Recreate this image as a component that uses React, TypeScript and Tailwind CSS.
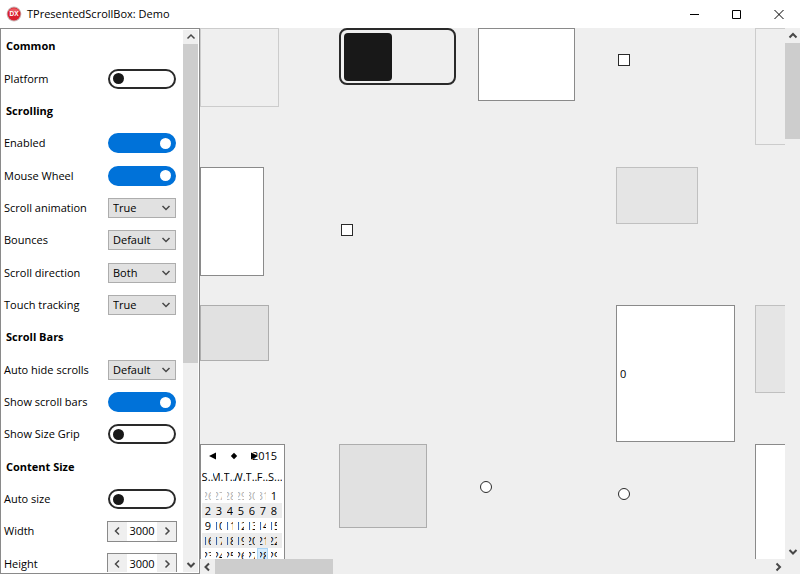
import React, { useState } from "react";

type Direction = "up" | "down" | "left" | "right";

const CHEVRONS: Record<Direction, string> = {
  up: "M1.5 6.5 5 3 8.5 6.5",
  down: "M1.5 3 5 6.5 8.5 3",
  left: "M6 1.5 2.5 5 6 8.5",
  right: "M3.5 1.5 7 5 3.5 8.5",
};

function Chevron({ direction, thick = false }: { direction: Direction; thick?: boolean }) {
  return (
    <svg width="10" height="10" viewBox="0 0 10 10" fill="none" stroke="#484848" strokeWidth={thick ? 2 : 1.5} aria-hidden="true">
      <path d={CHEVRONS[direction]} />
    </svg>
  );
}

function Logo() {
  return (
    <svg width="16" height="16" viewBox="0 0 16 16" aria-hidden="true">
      <circle cx="8" cy="8" r="7.4" fill="#c9bcbc" />
      <circle cx="8" cy="8" r="6.5" fill="#d9202c" />
      <path d="M2.6 5.6a6 6 0 0 1 10.8 0Q8 7.4 2.6 5.6Z" fill="#ea5a60" />
      <text x="8" y="10.2" textAnchor="middle" fontSize="6.5" fontWeight="700" fill="#fff" fontFamily="Liberation Sans, sans-serif">
        DX
      </text>
    </svg>
  );
}

function TitleBar() {
  return (
    <header className="flex h-7 shrink-0 items-center bg-white">
      <div className="flex flex-1 items-center gap-1 pl-1.5">
        <Logo />
        <h1 className="pl-px text-[11px] leading-4">TPresentedScrollBox: Demo</h1>
      </div>
      <button aria-label="Minimize" className="flex h-[26px] w-[42px] items-center justify-center">
        <svg width="11" height="11" viewBox="0 0 11 11" stroke="#000">
          <path d="M0 5.5h9" />
        </svg>
      </button>
      <button aria-label="Maximize" className="flex h-[26px] w-[42px] items-center justify-center">
        <svg width="11" height="11" viewBox="0 0 11 11" stroke="#000" fill="none">
          <path d="M.5 1.5h8v8h-8z" />
        </svg>
      </button>
      <button aria-label="Close" className="flex h-[26px] w-[42px] items-center justify-center">
        <svg width="11" height="11" viewBox="0 0 11 11" stroke="#000">
          <path d="m.5 1 9 9M9.5 1l-9 9" />
        </svg>
      </button>
    </header>
  );
}

function Heading({ children }: { children: React.ReactNode }) {
  return <h2 className="flex items-center pl-[5px] font-bold">{children}</h2>;
}

function Row({ id, label, children }: { id: string; label: string; children: React.ReactNode }) {
  return (
    <div className="flex items-center justify-between pr-[7px] pl-[3px]">
      <label htmlFor={id}>{label}</label>
      {children}
    </div>
  );
}

function SwitchRow({ id, label, on = false }: { id: string; label: string; on?: boolean }) {
  return (
    <Row id={id} label={label}>
      <input
        id={id}
        type="checkbox"
        role="switch"
        defaultChecked={on}
        className="flex h-5 w-[68px] appearance-none items-center rounded-full border-2 border-[#2a2a2a] bg-white px-[3px] before:size-[11px] before:rounded-full before:bg-[#181818] before:content-[''] checked:justify-end checked:border-[#0072d9] checked:bg-[#0072d9] checked:before:bg-white"
      />
    </Row>
  );
}

function SelectRow({ id, label, options }: { id: string; label: string; options: string[] }) {
  return (
    <Row id={id} label={label}>
      <div className="relative">
        <select
          id={id}
          className="block h-5 w-[68px] appearance-none border border-[#adadad] bg-[#e1e1e1] pl-1 leading-4"
        >
          {options.map((o) => (
            <option key={o}>{o}</option>
          ))}
        </select>
        <span className="pointer-events-none absolute top-[5px] right-[5px]">
          <Chevron direction="down" />
        </span>
      </div>
    </Row>
  );
}

function SpinRow({ id, label }: { id: string; label: string }) {
  const [value, setValue] = useState(3000);
  return (
    <Row id={id} label={label}>
      <div className="-mr-px flex h-[21px] w-[70px] border border-[#8a8a8a] bg-white">
        <button aria-label={`Decrease ${label}`} onClick={() => setValue(value - 1)} className="flex w-[19px] items-center justify-center bg-[#efefef]">
          <Chevron direction="left" />
        </button>
        <input
          id={id}
          value={value}
          onChange={(e) => setValue(Number(e.target.value) || 0)}
          className="w-[30px] min-w-0 text-center"
        />
        <button aria-label={`Increase ${label}`} onClick={() => setValue(value + 1)} className="flex w-[19px] items-center justify-center bg-[#efefef]">
          <Chevron direction="right" />
        </button>
      </div>
    </Row>
  );
}

function Settings() {
  return (
    <aside className="flex w-[200px] shrink-0 border border-[#8a8a8a] bg-white py-px pr-px">
      <div className="flex-1 overflow-hidden">
        <div className="grid h-[550px] auto-rows-fr">
          <Heading>Common</Heading>
          <SwitchRow id="platform" label="Platform" />
          <Heading>Scrolling</Heading>
          <SwitchRow id="enabled" label="Enabled" on />
          <SwitchRow id="wheel" label="Mouse Wheel" on />
          <SelectRow id="animation" label="Scroll animation" options={["True", "False"]} />
          <SelectRow id="bounces" label="Bounces" options={["Default", "True", "False"]} />
          <SelectRow id="direction" label="Scroll direction" options={["Both", "Horizontal", "Vertical"]} />
          <SelectRow id="tracking" label="Touch tracking" options={["True", "False"]} />
          <Heading>Scroll Bars</Heading>
          <SelectRow id="autohide" label="Auto hide scrolls" options={["Default", "True", "False"]} />
          <SwitchRow id="bars" label="Show scroll bars" on />
          <SwitchRow id="grip" label="Show Size Grip" />
          <Heading>Content Size</Heading>
          <SwitchRow id="autosize" label="Auto size" />
          <SpinRow id="width" label="Width" />
          <SpinRow id="height" label="Height" />
        </div>
      </div>
      <div className="flex w-[15px] flex-col bg-[#efefef]">
        <button aria-label="Scroll settings up" className="flex h-3.5 items-center justify-center">
          <Chevron direction="up" />
        </button>
        <div className="h-[319px] bg-[#cdcdcd]" />
        <div className="flex-1" />
        <button aria-label="Scroll settings down" className="flex h-[15px] items-center justify-center">
          <Chevron direction="down" thick />
        </button>
      </div>
    </aside>
  );
}

const WEEKDAYS = ["S..", "M..", "T..", "W..", "T..", "F..", "S..."];
const WEEKS = [
  [26, 27, 28, 29, 30, 31, 1],
  [2, 3, 4, 5, 6, 7, 8],
  [9, 10, 11, 12, 13, 14, 15],
  [16, 17, 18, 19, 20, 21, 22],
  [23, 24, 25, 26, 27, 28, 29],
];

function Calendar() {
  return (
    <div className="w-[85px] overflow-hidden border border-[#8a8a8a] bg-white px-px">
      <div className="flex h-[21px] items-center">
        <button aria-label="Previous month" className="flex w-[21px] justify-center">
          <svg width="7" height="8" viewBox="0 0 7 8"><path d="M0 4 7 .5v7z" /></svg>
        </button>
        <button aria-label="Today" className="flex w-[21px] justify-center">
          <svg width="8" height="8" viewBox="0 0 8 8"><path d="m4 .8 3.2 3.2L4 7.2.8 4z" /></svg>
        </button>
        <button aria-label="Next month" className="flex w-[21px] justify-center">
          <svg width="7" height="8" viewBox="0 0 7 8"><path d="M7 4 0 .5v7z" /></svg>
        </button>
        <button className="-ml-[13px]">2015</button>
      </div>
      <table className="border-collapse">
        <thead>
          <tr>
            {WEEKDAYS.map((d, i) => (
              <th key={i} className="p-0 font-normal">
                <div
                  className={
                    i === 6
                      ? "flex h-[22px] w-3.5 items-center overflow-hidden"
                      : "flex h-[22px] w-[11px] items-center justify-center overflow-hidden"
                  }
                >
                  <span>{d}</span>
                </div>
              </th>
            ))}
          </tr>
        </thead>
        <tbody>
          {WEEKS.map((week, w) => (
            <tr key={w} className="even:bg-[#ececec]">
              {week.map((day, i) => (
                <td
                  key={i}
                  className={
                    w === 4 && day === 28
                      ? "bg-[#d5ebfc] p-0 outline -outline-offset-1 outline-[#a8d4f5]"
                      : w === 0 && day > 20
                        ? "p-0 text-[#b0b0b0]"
                        : "p-0"
                  }
                >
                  <div className="mr-0.5 ml-[3px] flex h-[15px] w-1.5 items-center justify-center overflow-hidden">
                    <span>{day}</span>
                  </div>
                </td>
              ))}
            </tr>
          ))}
        </tbody>
      </table>
    </div>
  );
}

const CHECKBOX = "size-3 appearance-none border border-[#2a2a2a] bg-white";
const RADIO = "size-3 appearance-none rounded-full border border-[#2a2a2a] bg-white";

function Canvas() {
  return (
    <div className="min-h-0 min-w-0 flex-1 overflow-hidden">
      <div className="grid grid-cols-[139px_139px_138px_139px_139px] grid-rows-[139px_138px_139px_139px] items-start">
        <div className="h-[79px] w-[79px] border border-[#cccccc]" />
        <input
          type="checkbox"
          role="switch"
          aria-label="Large switch"
          className="flex h-[57px] w-[117px] appearance-none items-center rounded-lg border-2 border-[#2a2a2a] px-[3px] before:size-12 before:rounded-[4px] before:bg-[#181818] before:content-[''] checked:justify-end"
        />
        <textarea aria-label="Memo" className="block h-[73px] w-[97px] resize-none border border-[#8a8a8a] bg-white" />
        <div className="flex h-16 items-center pl-0.5">
          <input type="checkbox" aria-label="Option A" className={CHECKBOX} />
        </div>
        <div className="h-[117px] w-[117px] border border-[#cccccc]" />

        <textarea aria-label="Notes" className="block h-[109px] w-16 resize-none border border-[#8a8a8a] bg-white" />
        <div className="flex h-[126px] items-center pl-0.5">
          <input type="checkbox" aria-label="Option B" className={CHECKBOX} />
        </div>
        <div />
        <button aria-label="Tool" className="h-[57px] w-[82px] border border-[#c0c0c0] bg-[#e5e5e5]" />
        <div />

        <button aria-label="Action" className="h-14 w-[69px] border border-[#adadad] bg-[#e1e1e1]" />
        <div />
        <div />
        <input aria-label="Number" defaultValue="0" className="h-[137px] w-[119px] border border-[#8a8a8a] bg-white px-[3px]" />
        <button aria-label="Side tool" className="h-[88px] w-[117px] border border-[#c0c0c0] bg-[#e5e5e5]" />

        <Calendar />
        <button aria-label="Large action" className="h-[84px] w-[88px] border border-[#adadad] bg-[#e1e1e1]" />
        <div className="flex h-[86px] items-center pl-0.5">
          <input type="radio" name="choice" aria-label="Choice A" className={RADIO} />
        </div>
        <div className="flex h-[100px] items-center pl-0.5">
          <input type="radio" name="choice" aria-label="Choice B" className={RADIO} />
        </div>
        <textarea aria-label="List" className="block h-[139px] w-[117px] resize-none border border-[#8a8a8a] bg-white" />
      </div>
    </div>
  );
}

export default function App() {
  return (
    <div className="flex h-screen flex-col overflow-hidden bg-[#efefef] font-['Open_Sans','Noto_Sans',sans-serif] text-[11px] leading-4 text-black">
      <TitleBar />
      <div className="flex min-h-0 flex-1">
        <Settings />
        <main className="flex min-w-0 flex-1">
          <div className="flex min-w-0 flex-1 flex-col">
            <Canvas />
            <div className="flex h-[15px] shrink-0">
              <button aria-label="Scroll left" className="flex w-[15px] items-center justify-center">
                <Chevron direction="left" thick />
              </button>
              <div className="w-[118px] bg-[#cdcdcd]" />
              <div className="flex-1" />
              <button aria-label="Scroll right" className="flex w-[15px] items-center justify-center">
                <Chevron direction="right" thick />
              </button>
            </div>
          </div>
          <div className="mb-[15px] flex w-[15px] flex-col">
            <button aria-label="Scroll up" className="flex h-[15px] items-center justify-center">
              <Chevron direction="up" thick />
            </button>
            <div className="h-24 bg-[#cdcdcd]" />
            <div className="flex-1" />
            <button aria-label="Scroll down" className="flex h-[15px] items-center justify-center">
              <Chevron direction="down" thick />
            </button>
          </div>
        </main>
      </div>
    </div>
  );
}
